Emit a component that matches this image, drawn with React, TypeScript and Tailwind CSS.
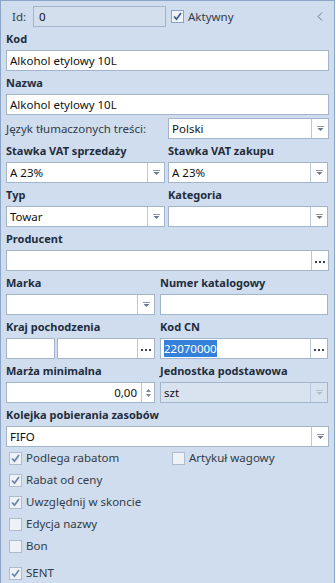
import React from 'react';

const font = { fontFamily: '"Noto Sans", "Open Sans", sans-serif' };

const Arrow = ({ disabled }: { disabled?: boolean }) => (
  <div className="flex h-full w-[17px] shrink-0 items-center justify-center border-l border-[#b9c8db]">
    <svg width="7" height="6" viewBox="0 0 7 6">
      <rect x="0" y="0" width="7" height="1" fill={disabled ? '#b4bfcc' : '#8a98a8'} />
      <path d="M0.5 2 L6.5 2 L3.5 5 Z" fill={disabled ? '#b4bfcc' : '#6b7888'} />
    </svg>
  </div>
);

const Dots = () => (
  <div className="flex h-full w-[17px] shrink-0 items-center justify-center gap-[2px] border-l border-[#b9c8db] pt-[3px]">
    <span className="h-[2px] w-[2px] bg-[#3a4656]" />
    <span className="h-[2px] w-[2px] bg-[#3a4656]" />
    <span className="h-[2px] w-[2px] bg-[#3a4656]" />
  </div>
);

const Label = ({ children, className = '' }: { children?: React.ReactNode; className?: string }) => (
  <div className={`flex h-[23px] items-center pt-[1px] text-[11px] font-bold text-[#1f2d3d] ${className}`}>{children}</div>
);

const Box = ({
  children,
  className = '',
  arrow,
  dots,
  disabled,
}: {
  children?: React.ReactNode;
  className?: string;
  arrow?: boolean;
  dots?: boolean;
  disabled?: boolean;
}) => (
  <div
    className={`flex h-[21px] items-stretch border border-[#a3b5cd] ${disabled ? 'bg-[#d9e3ef]' : 'bg-white'} ${className}`}
  >
    <div className="flex min-w-0 flex-1 items-center px-[3px] text-[11.5px] text-[#111]">{children}</div>
    {arrow && <Arrow disabled={disabled} />}
    {dots && <Dots />}
  </div>
);

const Check = ({ checked, label, bright }: { checked?: boolean; label: string; bright?: boolean }) => (
  <div className="flex items-center gap-[4px]">
    <div
      className={`flex h-[13px] w-[13px] items-center justify-center border ${
        bright ? 'border-[#8aa3c4] bg-[#eef3f9]' : 'border-[#aebccd] bg-[#eef2f7]'
      }`}
    >
      {checked && (
        <svg width="9" height="9" viewBox="0 0 9 9">
          <path d="M1 4.5 L3.5 7.2 L8 1" fill="none" stroke={bright ? '#3d5f8e' : '#6a86aa'} strokeWidth="1.8" />
        </svg>
      )}
    </div>
    <span className="text-[11.5px] text-[#333c47]">{label}</span>
  </div>
);

export default function App() {
  return (
    <div style={font} className="h-[583px] w-[335px] overflow-hidden border-l border-r border-t border-[#8da6c6] bg-[#cfddee] pl-[5px] pr-[5px] pt-[5px]">
      {/* Id row */}
      <div className="flex h-[21px] items-center">
        <span className="w-[27px] pl-[6px] text-[11.5px] text-[#333c47]">Id:</span>
        <div className="flex h-full w-[133px] items-center border border-[#a3b5cd] bg-[#d3dfed] px-[5px] text-[11.5px] text-[#111]">0</div>
        <div className="ml-[5px]">
          <Check checked bright label="Aktywny" />
        </div>
        <div className="ml-auto mr-[6px]">
          <svg width="6" height="9" viewBox="0 0 6 9">
            <path d="M5 0.5 L1 4.5 L5 8.5" fill="none" stroke="#6a7a8e" strokeWidth="1" />
          </svg>
        </div>
      </div>

      <Label>Kod</Label>
      <Box>Alkohol etylowy 10L</Box>

      <Label>Nazwa</Label>
      <Box>Alkohol etylowy 10L</Box>

      <div className="mt-[3px] flex h-[21px] items-center">
        <span className="w-[162px] text-[11.5px] text-[#333c47]">Język tłumaczonych treści:</span>
        <Box arrow className="flex-1">Polski</Box>
      </div>

      <div className="grid grid-cols-[159px_160px] gap-x-[3px]">
        <div>
          <Label>Stawka VAT sprzedaży</Label>
          <Box arrow>A 23%</Box>
        </div>
        <div>
          <Label>Stawka VAT zakupu</Label>
          <Box arrow>A 23%</Box>
        </div>
        <div>
          <Label>Typ</Label>
          <Box arrow>Towar</Box>
        </div>
        <div>
          <Label>Kategoria</Label>
          <Box arrow />
        </div>
      </div>

      <Label>Producent</Label>
      <Box dots />

      <div className="grid grid-cols-[149px_168px] gap-x-[5px]">
        <div>
          <Label>Marka</Label>
          <Box arrow />
        </div>
        <div>
          <Label>Numer katalogowy</Label>
          <Box />
        </div>
        <div>
          <Label>Kraj pochodzenia</Label>
          <div className="flex h-[21px] gap-[2px]">
            <Box className="w-[49px]" />
            <Box dots className="flex-1" />
          </div>
        </div>
        <div>
          <Label>Kod CN</Label>
          <Box dots>
            <span className="bg-[#3580db] text-white">22070000</span>
          </Box>
        </div>
        <div>
          <Label>Marża minimalna</Label>
          <div className="flex h-[21px] items-stretch border border-[#a3b5cd] bg-white">
            <div className="flex flex-1 items-center justify-end px-[4px] text-[11.5px] text-[#111]">0,00</div>
            <div className="flex w-[13px] flex-col items-center justify-center gap-[2px] border-l border-[#b9c8db]">
              <svg width="5" height="3" viewBox="0 0 5 3">
                <path d="M0 3 L2.5 0 L5 3 Z" fill="#7b8796" />
              </svg>
              <svg width="5" height="3" viewBox="0 0 5 3">
                <path d="M0 0 L5 0 L2.5 3 Z" fill="#7b8796" />
              </svg>
            </div>
          </div>
        </div>
        <div>
          <Label>Jednostka podstawowa</Label>
          <Box arrow disabled>szt</Box>
        </div>
      </div>

      <Label>Kolejka pobierania zasobów</Label>
      <Box arrow>FIFO</Box>

      <div className="pl-[3px]">
        <div className="flex h-[22px] items-center">
          <div className="w-[163px]">
            <Check checked label="Podlega rabatom" />
          </div>
          <Check label="Artykuł wagowy" />
        </div>
        <div className="flex h-[22px] items-center">
          <Check checked label="Rabat od ceny" />
        </div>
        <div className="flex h-[22px] items-center">
          <Check checked label="Uwzględnij w skoncie" />
        </div>
        <div className="flex h-[22px] items-center">
          <Check label="Edycja nazwy" />
        </div>
        <div className="flex h-[22px] items-center">
          <Check label="Bon" />
        </div>
        <div className="mt-[5px] flex h-[22px] items-center">
          <Check checked label="SENT" />
        </div>
      </div>
    </div>
  );
}
